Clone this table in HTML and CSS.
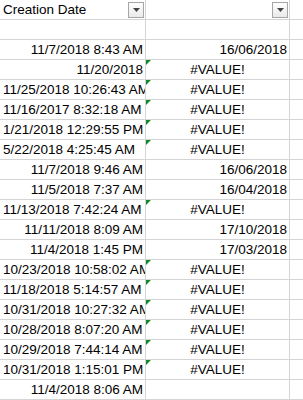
FILE: index.html
```html
<!DOCTYPE html>
<html>
<head>
<meta charset="utf-8">
<link rel="stylesheet" href="styles.css">
</head>
<body>
<div class="sheet">
  <div class="cell head"><span class="htext">Creation Date</span><span class="dd"><svg width="7" height="4" viewBox="0 0 7 4"><path d="M0 0H7L3.5 4Z" fill="#444"/></svg></span></div>
  <div class="cell head"><span class="htext"></span><span class="dd"><svg width="7" height="4" viewBox="0 0 7 4"><path d="M0 0H7L3.5 4Z" fill="#444"/></svg></span></div>
  <div class="cell last"></div>

  <div class="cell"></div><div class="cell"></div><div class="cell last"></div>

  <div class="cell r">11/7/2018 8:43 AM</div><div class="cell r">16/06/2018</div><div class="cell last"></div>
  <div class="cell r">11/20/2018</div><div class="cell c flag">#VALUE!</div><div class="cell last"></div>
  <div class="cell">11/25/2018 10:26:43 AM</div><div class="cell c flag">#VALUE!</div><div class="cell last"></div>
  <div class="cell">11/16/2017 8:32:18 AM</div><div class="cell c flag">#VALUE!</div><div class="cell last"></div>
  <div class="cell">1/21/2018 12:29:55 PM</div><div class="cell c flag">#VALUE!</div><div class="cell last"></div>
  <div class="cell">5/22/2018 4:25:45 AM</div><div class="cell c flag">#VALUE!</div><div class="cell last"></div>
  <div class="cell r">11/7/2018 9:46 AM</div><div class="cell r">16/06/2018</div><div class="cell last"></div>
  <div class="cell r">11/5/2018 7:37 AM</div><div class="cell r">16/04/2018</div><div class="cell last"></div>
  <div class="cell">11/13/2018 7:42:24 AM</div><div class="cell c flag">#VALUE!</div><div class="cell last"></div>
  <div class="cell r">11/11/2018 8:09 AM</div><div class="cell r">17/10/2018</div><div class="cell last"></div>
  <div class="cell r">11/4/2018 1:45 PM</div><div class="cell r">17/03/2018</div><div class="cell last"></div>
  <div class="cell">10/23/2018 10:58:02 AM</div><div class="cell c flag">#VALUE!</div><div class="cell last"></div>
  <div class="cell">11/18/2018 5:14:57 AM</div><div class="cell c flag">#VALUE!</div><div class="cell last"></div>
  <div class="cell">10/31/2018 10:27:32 AM</div><div class="cell c flag">#VALUE!</div><div class="cell last"></div>
  <div class="cell">10/28/2018 8:07:20 AM</div><div class="cell c flag">#VALUE!</div><div class="cell last"></div>
  <div class="cell">10/29/2018 7:44:14 AM</div><div class="cell c flag">#VALUE!</div><div class="cell last"></div>
  <div class="cell">10/31/2018 1:15:01 PM</div><div class="cell c flag">#VALUE!</div><div class="cell last"></div>
  <div class="cell r">11/4/2018 8:06 AM</div><div class="cell"></div><div class="cell last"></div>
</div>
</body>
</html>
```

FILE: styles.css
```css
html, body {
  margin: 0;
  padding: 0;
  background: #ffffff;
  overflow: hidden;
}

.sheet {
  display: grid;
  grid-template-columns: 146px 144px 1fr;
  grid-auto-rows: 20px;
  width: 303px;
  font-family: "Liberation Sans", Arial, sans-serif;
  font-size: 13.5px;
  color: #000000;
}

.cell {
  position: relative;
  box-sizing: border-box;
  height: 20px;
  line-height: 19px;
  padding: 0 2px 0 3px;
  border-right: 1px solid #d4d4d4;
  border-bottom: 1px solid #d4d4d4;
  white-space: nowrap;
  overflow: hidden;
}

.cell.last {
  border-right: none;
}

.cell.r {
  text-align: right;
}

.cell.c {
  text-align: center;
  padding: 0;
}

.cell.flag::before {
  content: "";
  position: absolute;
  left: 0;
  top: 0;
  width: 0;
  height: 0;
  border-top: 5px solid #128a2b;
  border-right: 5px solid transparent;
}

.head {
  display: flex;
  align-items: flex-start;
  justify-content: space-between;
  padding-right: 1px;
}

.htext {
  line-height: 19px;
}

.dd {
  box-sizing: border-box;
  width: 16px;
  height: 16px;
  margin-top: 2px;
  border: 1px solid #a6a6a6;
  background: linear-gradient(#ffffff, #eaeaea);
  display: flex;
  align-items: center;
  justify-content: center;
}

.dd svg {
  display: block;
}
```
